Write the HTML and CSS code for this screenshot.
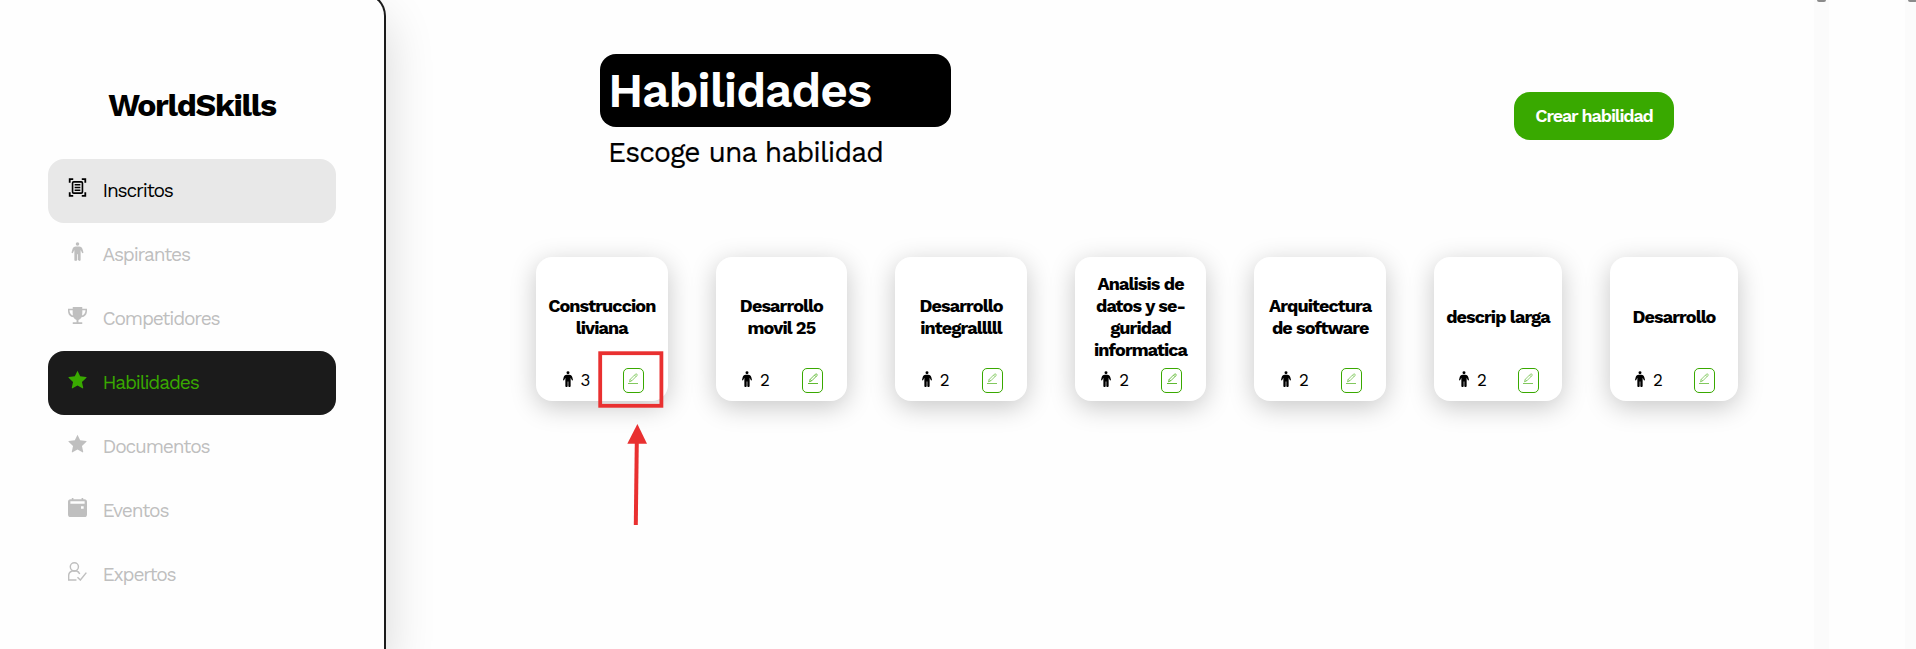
FILE: index.html
```
<!DOCTYPE html>
<html lang="es">
<head>
<meta charset="utf-8">
<title>WorldSkills</title>
<link rel="stylesheet" href="styles.css">
</head>
<body>
<svg class="sprite" aria-hidden="true">
  <symbol id="scan" viewBox="0 0 20 20"><path d="M1.8 5V1.2h3.7M14.5 1.2h3.7V5M1.8 15v3.8h3.7M14.5 18.800h3.700V15" fill="none" stroke="currentColor" stroke-width="1.9"/><rect x="4.800" y="4.100" width="10.400" height="11.800" rx="1.200" fill="none" stroke="currentColor" stroke-width="1.700"/><path d="M7 7.200h6M7 10h6M7 12.800h6" stroke="currentColor" stroke-width="1.600"/></symbol>
  <symbol id="man" viewBox="0 0 20 20"><circle cx="10" cy="2.100" r="1.850"/><path d="M8.300 4.700h3.400c2 0 3.200 1.300 3.700 3.100l.8 3c.2.900-1.100 1.400-1.500.5L13.300 8.500V19c0 1.200-2.900 1.200-2.900 0v-6H9.600v6c0 1.200-2.900 1.200-2.900 0V8.500l-1.400 2.800c-.4.9-1.700.4-1.500-.5l.8-3c.5-1.800 1.700-3.100 3.700-3.100z"/></symbol>
  <symbol id="trophy" viewBox="0 0 20 20"><path d="M5 1h10v2h5v2c0 4-2.200 6.500-5.800 6.900-.8 1.500-1.900 2.500-3.200 2.800v2.500h4v1.800H5v-1.800h4v-2.500c-1.300-.3-2.400-1.300-3.200-2.800C2.200 11.500 0 9 0 5V3h5zM1.600 4.600c0 2.700 1.300 4.700 3.600 5.500C4.900 8.500 4.900 6 4.900 4.600zm13.500 0c0 1.400 0 3.900-.3 5.500 2.300-.8 3.600-2.800 3.600-5.500z" fill-rule="evenodd"/></symbol>
  <symbol id="star" viewBox="0 0 20 20"><path d="M10 .8l2.800 5.800 6.300.7c.5.100.6.500.3.900l-4.700 4.300 1.300 6.200c.1.500-.4.800-.8.600L10 16.200l-5.200 3.100c-.4.200-.9-.1-.8-.6l1.300-6.200L.6 8.200c-.3-.4-.2-.8.3-.9l6.300-.7z"/></symbol>
  <symbol id="event" viewBox="0 0 20 20"><path d="M4 0h1.700v1.200h8.600V0H16v1.200h1.300A2.700 2.700 0 0 1 20 3.900v13.400a2.700 2.700 0 0 1-2.700 2.700H2.700A2.700 2.700 0 0 1 0 17.300V3.900a2.700 2.700 0 0 1 2.700-2.700H4zM2.500 3.300v2.800h15V3.300zM13.700 8.600v2.800h2.800V8.600z" fill-rule="evenodd"/></symbol>
  <symbol id="expert" viewBox="0 0 20 20"><path d="M8.900 19H.7v-4.500c0-2.400 1.500-4.200 3.600-5h4.800c1.600.6 2.700 1.700 3.200 3.100M10 16l3 3 6.300-7.800" fill="none" stroke="currentColor" stroke-width="1.500"/><circle cx="6.700" cy="5.100" r="4.300" fill="none" stroke="currentColor" stroke-width="1.500"/></symbol>
  <symbol id="pen" viewBox="0 0 12 12"><path d="M2.500 8.800L3.200 6.400 8.400 1.200Q9.200.5 9.900 1.200t0 1.500L4.700 7.900zM7.500 2.100 9 3.600M3.200 6.400 4.700 7.900" fill="none" stroke="currentColor" stroke-width=".8"/><path d="M1 10.500h10" stroke="currentColor" stroke-width=".9"/></symbol>
</svg>
<div class="app">
  <aside class="sidebar">
    <h2 class="logo">WorldSkills</h2>
    <nav class="nav">
      <a class="item hover"><svg class="icon"><use href="#scan"/></svg><span>Inscritos</span></a>
      <a class="item"><svg class="icon"><use href="#man"/></svg><span>Aspirantes</span></a>
      <a class="item"><svg class="icon"><use href="#trophy"/></svg><span>Competidores</span></a>
      <a class="item active"><svg class="icon"><use href="#star"/></svg><span>Habilidades</span></a>
      <a class="item"><svg class="icon"><use href="#star"/></svg><span>Documentos</span></a>
      <a class="item"><svg class="icon"><use href="#event"/></svg><span>Eventos</span></a>
      <a class="item"><svg class="icon"><use href="#expert"/></svg><span>Expertos</span></a>
    </nav>
  </aside>
  <main class="main">
    <header class="header">
      <div class="titles"><h1 class="title">Habilidades</h1><p class="subtitle">Escoge una habilidad</p></div>
      <button class="create">Crear habilidad</button>
    </header>
    <section class="cards">
      <article class="card"><h3 class="name"><span>Construccion</span><span>liviana</span></h3><div class="foot"><svg class="person"><use href="#man"/></svg><span class="count">3</span><button class="edit"><svg class="pen"><use href="#pen"/></svg></button></div>
        <svg class="note" viewBox="0 0 70 178"><rect x="2.200" y="2.200" width="61.200" height="52.600" fill="none" stroke="#e93030" stroke-width="3.800"/><path d="M38.800 90 37.800 174" stroke="#e93030" stroke-width="4"/><path d="M39.400 73 49 92.800H29.300z" fill="#e93030"/></svg>
      </article>
      <article class="card"><h3 class="name"><span>Desarrollo</span><span>movil 25</span></h3><div class="foot"><svg class="person"><use href="#man"/></svg><span class="count">2</span><button class="edit"><svg class="pen strong"><use href="#pen"/></svg></button></div></article>
      <article class="card"><h3 class="name"><span>Desarrollo</span><span>integralllll</span></h3><div class="foot"><svg class="person"><use href="#man"/></svg><span class="count">2</span><button class="edit"><svg class="pen"><use href="#pen"/></svg></button></div></article>
      <article class="card"><h3 class="name"><span>Analisis de</span><span>datos y se-</span><span>guridad</span><span>informatica</span></h3><div class="foot"><svg class="person"><use href="#man"/></svg><span class="count">2</span><button class="edit"><svg class="pen strong"><use href="#pen"/></svg></button></div></article>
      <article class="card"><h3 class="name"><span>Arquitectura</span><span>de software</span></h3><div class="foot"><svg class="person"><use href="#man"/></svg><span class="count">2</span><button class="edit"><svg class="pen"><use href="#pen"/></svg></button></div></article>
      <article class="card narrow"><h3 class="name"><span>descrip larga</span></h3><div class="foot"><svg class="person"><use href="#man"/></svg><span class="count">2</span><button class="edit"><svg class="pen"><use href="#pen"/></svg></button></div></article>
      <article class="card narrow"><h3 class="name"><span>Desarrollo</span></h3><div class="foot"><svg class="person"><use href="#man"/></svg><span class="count">2</span><button class="edit"><svg class="pen"><use href="#pen"/></svg></button></div></article>
    </section>
  </main>
  <div class="track inner"><div class="thumb"></div></div>
  <div class="gap"></div>
  <div class="track outer"><div class="thumb"></div></div>
</div>
</body>
</html>
```
FILE: styles.css
```
* { box-sizing: border-box; margin: 0; padding: 0; }
body { font-family: "Work Sans", Inter, sans-serif; background: #fefefe; color: #000; }
.sprite { position: absolute; width: 0; height: 0; }
svg { fill: currentColor; flex: none; display: block; }
.app { display: flex; height: 649px; overflow: hidden; }
.sidebar { flex: none; width: 386px; height: 657px; margin-top: -8px; padding: 91px 48px 0; border-right: 2px solid #1b1b1b; border-top: 2px solid #1b1b1b; border-top-right-radius: 24px; background: #fefefe; box-shadow: 0 25px 50px rgba(0,0,0,.16); }
.logo { font-size: 32px; line-height: 40px; letter-spacing: -.04em; font-weight: 700; text-align: center; white-space: nowrap; }
.nav { margin-top: 34px; display: flex; flex-direction: column; }
.item { height: 64px; width: 288px; display: flex; align-items: center; gap: 15.500px; padding-left: 20px; border-radius: 16px; color: #bfbfbf; font-size: 19.200px; line-height: 24px; letter-spacing: -1.180px; white-space: nowrap; }
.item.hover { background: #e8e8e8; color: #000; }
.item.active { background: #1b1b1b; color: #39a900; }
.icon { width: 19px; height: 19px; margin-bottom: 7px; }
.main { flex: none; width: 1428px; padding: 54px 76px 0 150px; }
.header { display: flex; justify-content: space-between; padding: 0 64px; height: 203px; }
.title { width: 351px; height: 73px; padding-left: 8px; border-radius: 16px; background: #000; color: #fff; font-size: 48px; line-height: 74px; letter-spacing: -.025em; font-weight: 600; }
.subtitle { padding: 9px 0 0 8px; font-size: 28.200px; line-height: 34px; letter-spacing: -.85px; white-space: nowrap; -webkit-text-stroke: .2px #000; }
.create { width: 160px; height: 48px; margin-top: 38px; border: 0; border-radius: 16px; background: #39a900; color: #fff; font: 600 18px/48px "Work Sans", Inter, sans-serif; letter-spacing: -1.150px; white-space: nowrap; }
.cards { display: flex; gap: 48px; }
.card { position: relative; flex: none; width: 131.600px; height: 144px; padding-top: 16px; border-radius: 16px; background: #fff; box-shadow: 0 6px 26px rgba(0,0,0,.22); }
.card.narrow { width: 128px; }
.name { height: 88px; display: flex; flex-direction: column; align-items: center; justify-content: center; font-size: 18px; line-height: 22px; letter-spacing: -.05em; font-weight: 700; white-space: nowrap; }
.foot { display: flex; align-items: center; height: 25px; margin-top: 7px; padding: 0 24px 0 23.500px; }
.narrow .foot { padding: 0 23px 0 22px; }
.person { width: 16px; height: 16px; margin-bottom: 4px; }
.count { margin-left: 5px; font-size: 17px; line-height: 25px; }
.edit { width: 21px; height: 25px; margin-left: auto; border: 1px solid #39a900; border-radius: 5px; background: #fff; color: #39a900; display: flex; justify-content: center; padding-top: 4px; }
.pen { width: 12px; height: 12px; opacity: .7; }
.pen.strong { opacity: .9; }
.note { position: absolute; left: 62px; top: 94px; width: 70px; height: 178px; z-index: 2; }
.track { flex: none; background: #fbfbfb; }
.inner { width: 15px; }
.outer { width: 11px; overflow: hidden; }
.gap { width: 76px; flex: none; }
.thumb { width: 9px; height: 2px; margin-left: 3px; background: #8b8b8b; border-radius: 0 0 2px 2px; }
```
